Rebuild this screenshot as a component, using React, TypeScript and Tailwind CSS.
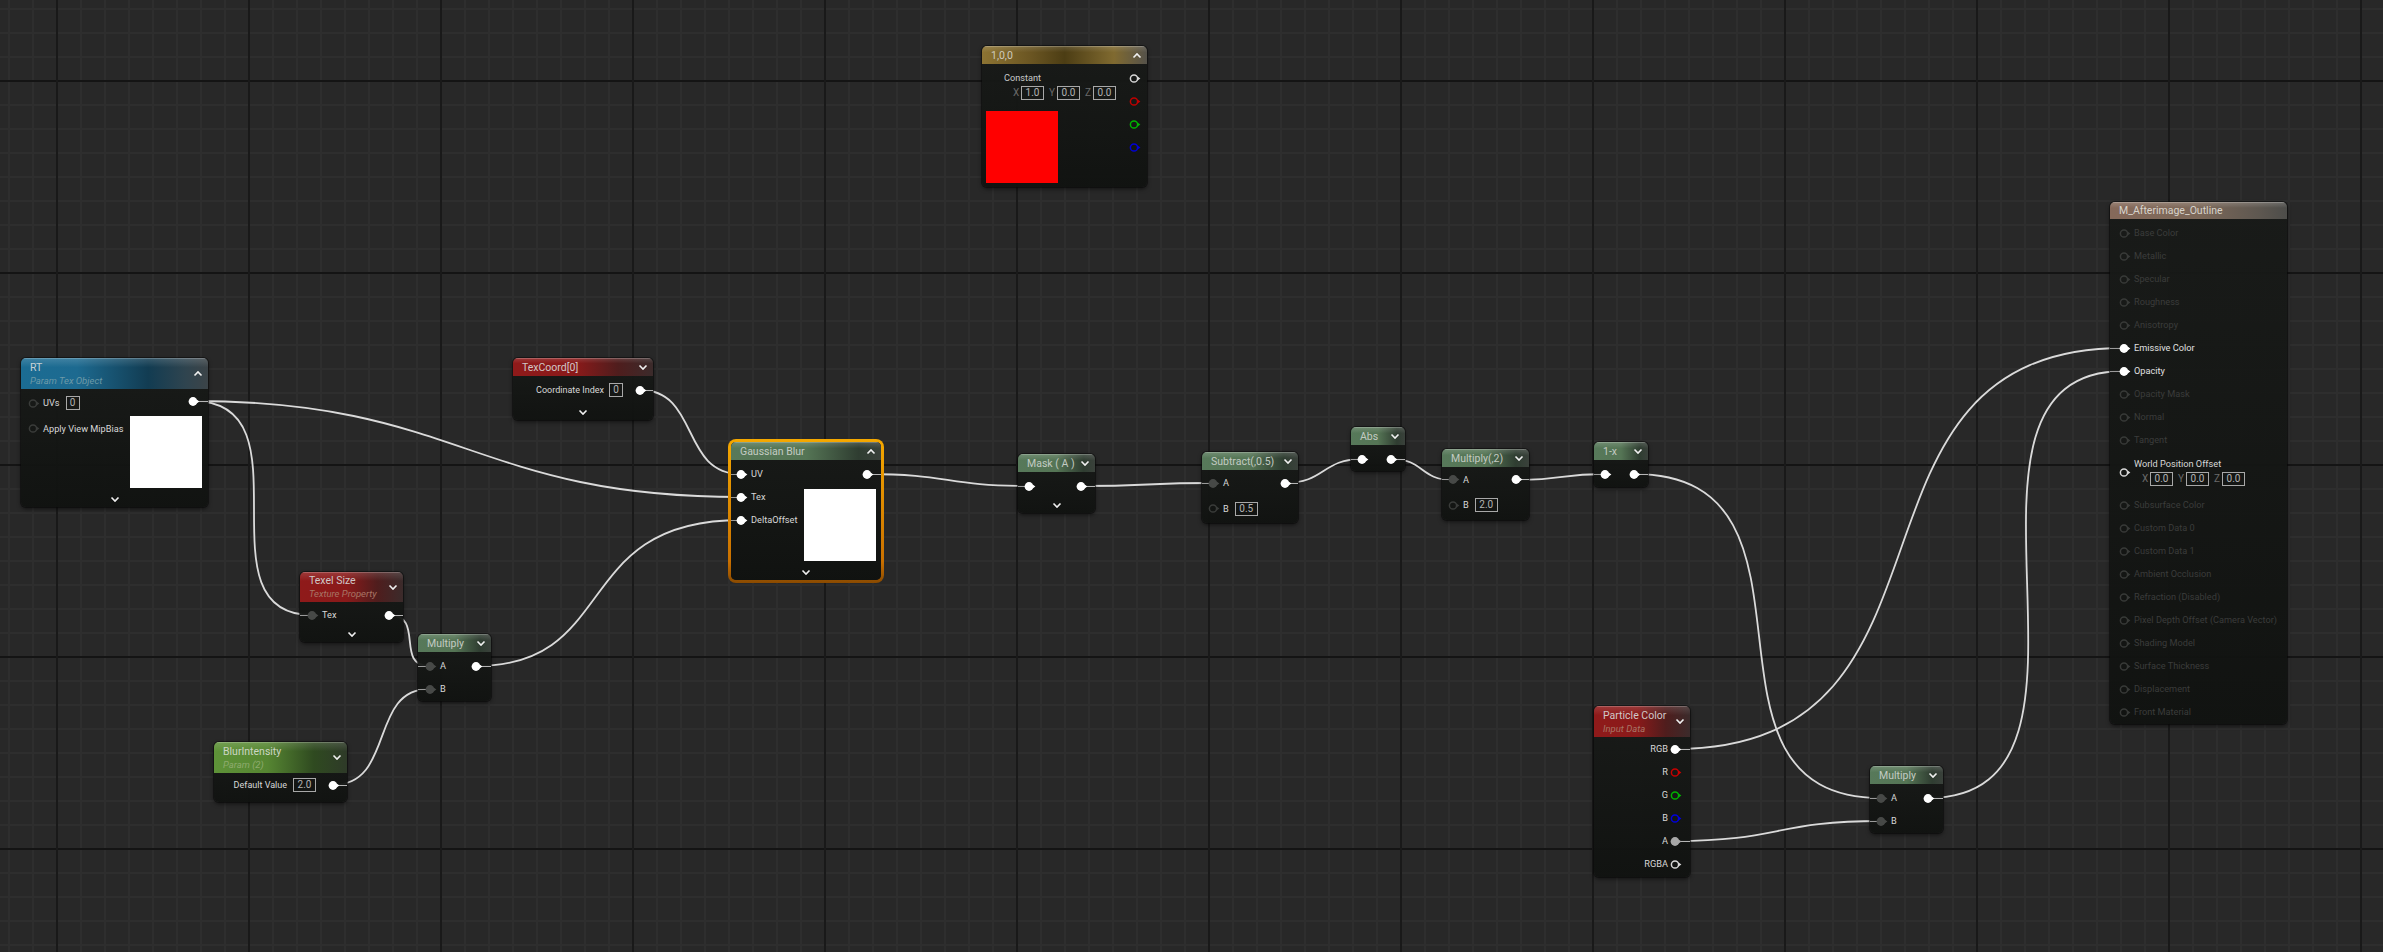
import type { ReactNode } from 'react';

type Tone = 'blue' | 'red' | 'green' | 'lime' | 'gold' | 'brown';

const toneHeader: Record<Tone, string> = {
    blue: 'bg-[linear-gradient(180deg,rgba(255,255,255,0.16),rgba(255,255,255,0)_30%),linear-gradient(90deg,#1b6c93_0%,#1d6a90_30%,#123c52_68%,#2f444f_88%,#3c4448_100%)]',
    red: 'bg-[linear-gradient(180deg,rgba(255,255,255,0.14),rgba(255,255,255,0)_30%),linear-gradient(90deg,#8f1a1a_0%,#8a1a1a_45%,#4f1d1d_75%,#3b2b2b_100%)]',
    green: 'bg-[linear-gradient(180deg,rgba(255,255,255,0.16),rgba(255,255,255,0)_35%),linear-gradient(90deg,#57795a_0%,#557555_50%,#2f3d31_85%,#3a413b_100%)]',
    lime: 'bg-[linear-gradient(180deg,rgba(255,255,255,0.14),rgba(255,255,255,0)_30%),linear-gradient(90deg,#5e9238_0%,#568632_40%,#2f4a20_75%,#2e3a28_100%)]',
    gold: 'bg-[linear-gradient(180deg,rgba(255,255,255,0.14),rgba(255,255,255,0)_35%),linear-gradient(90deg,#8d7433_0%,#6a5522_30%,#4c3d14_50%,#806a30_80%,#55524a_100%)]',
    brown: 'bg-[linear-gradient(180deg,rgba(255,255,255,0.18),rgba(255,255,255,0)_35%),linear-gradient(90deg,#85695a_0%,#7c6859_50%,#5d5750_85%,#4d4d4a_100%)]',
};

function Chevron({ up }: { up?: boolean }) {
    return (
        <svg width="10" height="7" viewBox="0 0 10 7" className="shrink-0">
            <path d={up ? 'M1.5 5.5 5 2l3.5 3.5' : 'M1.5 1.5 5 5l3.5-3.5'} fill="none" stroke="#f0f0f0" strokeWidth="1.6" />
        </svg>
    );
}

type PinProps = {
    color?: string;
    fill?: boolean;
    wired?: 'in' | 'out';
};

function Pin({ color = '#ffffff', fill = false, wired }: PinProps) {
    return (
        <svg width="13" height="11" viewBox="0 0 13 11" className="shrink-0 overflow-visible">
            {/* short lead to the node edge, the node clips it */}
            {wired === 'in' && <line x1="-12" y1="5.5" x2="2" y2="5.5" stroke="#9a9a9a" strokeWidth="1" />}
            {wired === 'out' && <line x1="9" y1="5.5" x2="30" y2="5.5" stroke="#b5b5b5" strokeWidth="1" />}
            <path d="M8.6 3.4 11.4 5.5 8.6 7.6Z" fill={color} />
            {fill ? (
                <circle cx="5" cy="5.5" r="4.4" fill={color} />
            ) : (
                <circle cx="5" cy="5.5" r="3.6" fill="none" stroke={color} strokeWidth="1.5" />
            )}
        </svg>
    );
}

function ValueBox({ children, wide }: { children: ReactNode; wide?: boolean }) {
    return (
        <span className={`flex h-[14px] items-center justify-center border border-[#a8a8a8] text-[10px] leading-none text-[#b4b4b4] ${wide ? 'w-[23px]' : 'w-[14px]'}`}>
            {children}
        </span>
    );
}

function VectorInput({ x = '0.0' }: { x?: string }) {
    const axes = [
        ['X', x],
        ['Y', '0.0'],
        ['Z', '0.0'],
    ];
    return (
        <div className="flex gap-[5px]">
            {axes.map(([axis, value]) => (
                <div key={axis} className="flex items-center gap-[2px]">
                    <span className="w-[6px] text-[10px] leading-none text-[#6a6a6a]">{axis}</span>
                    <ValueBox wide>{value}</ValueBox>
                </div>
            ))}
        </div>
    );
}

function Row({ children, className = '' }: { children: ReactNode; className?: string }) {
    return <div className={`flex h-[23px] items-center gap-[2px] whitespace-nowrap text-[9.2px] leading-none text-[#d8d8d8] ${className}`}>{children}</div>;
}

function Preview({ className = '' }: { className?: string }) {
    return <div className={`h-[72px] w-[72px] bg-white ${className}`} />;
}

function MoreRow({ className = 'h-[15px]' }: { className?: string }) {
    return (
        <div className={`mt-auto flex shrink-0 items-center justify-center ${className}`}>
            <Chevron />
        </div>
    );
}

type NodeProps = {
    box: string;
    head: string;
    tone: Tone;
    title: string;
    sub?: string;
    subColor?: string;
    chevron?: 'up' | 'down' | null;
    titleColor?: string;
    children: ReactNode;
};

function GraphNode({ box, head, tone, title, sub, subColor, chevron = 'down', titleColor = 'text-[#c3cbc3]', children }: NodeProps) {
    return (
        <div className={`absolute flex flex-col overflow-hidden rounded-[5px] bg-[linear-gradient(180deg,rgba(24,26,24,0.95),rgba(16,18,16,0.95))] shadow-[0_0_0_1px_rgba(10,10,10,0.55),0_2px_4px_rgba(0,0,0,0.55)] ${box}`}>
            <div className={`flex shrink-0 items-center justify-between pl-[9px] pr-[5px] shadow-[inset_0_1px_0_rgba(255,255,255,0.2)] ${head} ${toneHeader[tone]}`}>
                <div className="flex flex-col gap-[3px] whitespace-nowrap">
                    <span className={`text-[10.5px] leading-[11px] ${titleColor}`}>{title}</span>
                    {sub && <span className={`text-[9.5px] italic leading-[10px] ${subColor}`}>{sub}</span>}
                </div>
                {chevron && <Chevron up={chevron === 'up'} />}
            </div>
            {children}
        </div>
    );
}

const wires = [
    'M193 401C314 401 195 615 312 615',
    'M193 401C460 401 474 497 741 497',
    'M640 390C700 390 680 474 741 474',
    'M476 666C620 666 570 520 741 520',
    'M389 615C425 615 395 666 429 666',
    'M333 785C395 785 369 689 429 689',
    'M867 474C950 474 945 486 1029 486',
    'M1081 486C1150 486 1145 483 1213 483',
    'M1285 483C1325 483 1322 459 1362 459',
    'M1391 459C1425 459 1419 480 1453 480',
    'M1516 480C1560 480 1560 474 1605 474',
    'M1634 474C1846 474 1673 798 1881 798',
    'M1675 749C1985 749 1818 348 2124 348',
    'M1675 841C1780 841 1775 821 1881 821',
    'M1928 798C2139 798 1916 371 2124 371',
];

const materialTop = ['Base Color', 'Metallic', 'Specular', 'Roughness', 'Anisotropy'];
const materialMid = ['Opacity Mask', 'Normal', 'Tangent'];
const materialBottom = [
    'Subsurface Color',
    'Custom Data 0',
    'Custom Data 1',
    'Ambient Occlusion',
    'Refraction (Disabled)',
    'Pixel Depth Offset (Camera Vector)',
    'Shading Model',
    'Surface Thickness',
    'Displacement',
    'Front Material',
];

function DimRow({ label }: { label: string }) {
    return (
        <Row className="pl-[9px] !text-[#3b3c3b]">
            <Pin color="#383a38" />
            {label}
        </Row>
    );
}

export default function App() {
    return (
        <div className="relative h-[952px] w-[2383px] overflow-hidden bg-[#282828] [font-family:Roboto,sans-serif] [background-image:linear-gradient(to_right,#191919_2px,transparent_2px),linear-gradient(to_bottom,#141414_2px,transparent_2px),linear-gradient(to_right,#2e2e2e_2px,transparent_2px),linear-gradient(to_bottom,#2e2e2e_2px,transparent_2px)] [background-size:192px_100%,100%_192px,24px_100%,100%_24px] [background-position:56px_0,0_80px,8px_0,0_8px]">
            {/* Wires */}
            <svg className="absolute inset-0" width="2383" height="952" viewBox="0 0 2383 952" fill="none">
                {wires.map((d) => (
                    <path key={d} d={d} stroke="#dadada" strokeWidth="1.8" />
                ))}
            </svg>

            {/* RT */}
            <GraphNode box="left-[21px] top-[358px] w-[187px] h-[149px]" head="h-[31px]" tone="blue" title="RT" sub="Param Tex Object" subColor="text-[#6d9aa8]" chevron="up" titleColor="text-[#c8d2d6]">
                <div className="flex justify-between pl-[7px] pr-[6px]">
                    <div className="pt-[2.5px]">
                        <Row>
                            <Pin color="#3a3c3a" />
                            UVs
                            <span className="ml-[4px]"><ValueBox>0</ValueBox></span>
                        </Row>
                        <Row className="mt-[2.5px]">
                            <Pin color="#3a3c3a" />
                            Apply View MipBias
                        </Row>
                    </div>
                    <div className="flex flex-col items-end">
                        <div className="flex h-[24px] items-center pr-[1px]"><Pin fill wired="out" /></div>
                        <Preview className="mt-[3px]" />
                    </div>
                </div>
                <MoreRow />
            </GraphNode>

            {/* TexCoord */}
            <GraphNode box="left-[513px] top-[358px] w-[140px] h-[62px]" head="h-[18px]" tone="red" title="TexCoord[0]" titleColor="text-[#d0c8c8]">
                <div className="flex justify-end pr-[5px] pt-[2.5px]">
                    <Row className="!text-[9px]">
                        Coordinate Index
                        <span className="ml-[3px] mr-[10px]"><ValueBox>0</ValueBox></span>
                        <Pin fill wired="out" />
                    </Row>
                </div>
                <MoreRow />
            </GraphNode>

            {/* Texel Size */}
            <GraphNode box="left-[300px] top-[572px] w-[103px] h-[70px]" head="h-[30px]" tone="red" title="Texel Size" sub="Texture Property" subColor="text-[#a87565]" titleColor="text-[#d0c8c8]">
                <div className="flex justify-between pl-[7px] pr-[6px] pt-[1.5px]">
                    <Row>
                        <Pin color="#474947" fill wired="in" />
                        Tex
                    </Row>
                    <Row><Pin fill wired="out" /></Row>
                </div>
                <MoreRow className="h-[15px]" />
            </GraphNode>

            {/* Multiply */}
            <GraphNode box="left-[418px] top-[634px] w-[73px] h-[67px]" head="h-[18px]" tone="green" title="Multiply">
                <div className="flex justify-between pl-[7px] pr-[7px] pt-[2.5px]">
                    <div>
                        <Row><Pin color="#474947" fill wired="in" />A</Row>
                        <Row><Pin color="#474947" fill wired="in" />B</Row>
                    </div>
                    <Row><Pin fill wired="out" /></Row>
                </div>
            </GraphNode>

            {/* BlurIntensity */}
            <GraphNode box="left-[214px] top-[742px] w-[133px] h-[60px]" head="h-[31px]" tone="lime" title="BlurIntensity" sub="Param (2)" subColor="text-[#8eab6e]" titleColor="text-[#cdd6c4]">
                <div className="flex justify-end pr-[6px] pt-[0.5px]">
                    <Row className="!text-[9px]">
                        Default Value
                        <span className="ml-[4px] mr-[10px]"><ValueBox wide>2.0</ValueBox></span>
                        <Pin fill wired="out" />
                    </Row>
                </div>
            </GraphNode>

            {/* Constant */}
            <GraphNode box="left-[982px] top-[46px] w-[165px] h-[141px]" head="h-[18px]" tone="gold" title="1,0,0" chevron="up" titleColor="text-[#cfcbbd]">
                <div className="flex justify-between pl-[4px] pr-[5px]">
                    <div className="pt-[7px]">
                        <div className="h-[14px] pl-[18px] text-[9.2px] leading-[14px] text-[#c8c8c8]">Constant</div>
                        <div className="pl-[27px] pt-[1px]"><VectorInput x="1.0" /></div>
                        <div className="mt-[11px] h-[72px] w-[72px] bg-[#ff0000]" />
                    </div>
                    <div className="pt-[2.5px]">
                        <Row><Pin color="#d8d8d8" /></Row>
                        <Row><Pin color="#c00000" /></Row>
                        <Row><Pin color="#00b400" /></Row>
                        <Row><Pin color="#0000d8" /></Row>
                    </div>
                </div>
            </GraphNode>

            {/* Gaussian Blur, selected */}
            <div className="absolute left-[728px] top-[439px] h-[144px] w-[156px] rounded-[8px] bg-[linear-gradient(180deg,#f5a800,#c97000_85%,#8a4a00)] p-[3px]">
                <div className="relative h-full w-full rounded-[5px] bg-[#161716]">
                    <GraphNode box="inset-0 !shadow-none" head="h-[18px]" tone="green" title="Gaussian Blur" chevron="up">
                        <div className="flex justify-between pl-[5px] pr-[5px] pt-[2.5px]">
                            <div>
                                <Row><Pin fill wired="in" />UV</Row>
                                <Row><Pin fill wired="in" />Tex</Row>
                                <Row><Pin fill wired="in" />DeltaOffset</Row>
                            </div>
                            <div className="flex flex-col items-end">
                                <Row className="pr-[1px]"><Pin fill wired="out" /></Row>
                                <Preview className="mt-[3.5px]" />
                            </div>
                        </div>
                        <MoreRow className="h-[16px]" />
                    </GraphNode>
                </div>
            </div>

            {/* Mask ( A ) */}
            <GraphNode box="left-[1018px] top-[454px] w-[77px] h-[59px]" head="h-[18px]" tone="green" title="Mask ( A )">
                <div className="flex justify-between pl-[6px] pr-[6px] pt-[2.5px]">
                    <Row><Pin fill wired="in" /></Row>
                    <Row><Pin fill wired="out" /></Row>
                </div>
                <MoreRow />
            </GraphNode>

            {/* Subtract */}
            <GraphNode box="left-[1202px] top-[452px] w-[96px] h-[71px]" head="h-[18px]" tone="green" title="Subtract(,0.5)">
                <div className="flex justify-between pl-[6px] pr-[5px] pt-[1.5px]">
                    <div>
                        <Row><Pin color="#474947" fill wired="in" />A</Row>
                        <Row className="mt-[2.5px]">
                            <Pin color="#3a3c3a" />
                            B
                            <span className="ml-[4px]"><ValueBox wide>0.5</ValueBox></span>
                        </Row>
                    </div>
                    <Row><Pin fill wired="out" /></Row>
                </div>
            </GraphNode>

            {/* Abs */}
            <GraphNode box="left-[1351px] top-[427px] w-[54px] h-[44px]" head="h-[18px]" tone="green" title="Abs">
                <div className="flex justify-between pl-[6px] pr-[6px] pt-[2.5px]">
                    <Row><Pin fill wired="in" /></Row>
                    <Row><Pin fill wired="out" /></Row>
                </div>
            </GraphNode>

            {/* Multiply(,2) */}
            <GraphNode box="left-[1442px] top-[449px] w-[87px] h-[71px]" head="h-[18px]" tone="green" title="Multiply(,2)">
                <div className="flex justify-between pl-[6px] pr-[5px] pt-[1px]">
                    <div>
                        <Row><Pin color="#474947" fill wired="in" />A</Row>
                        <Row className="mt-[2.5px]">
                            <Pin color="#3a3c3a" />
                            B
                            <span className="ml-[4px]"><ValueBox wide>2.0</ValueBox></span>
                        </Row>
                    </div>
                    <Row><Pin fill wired="out" /></Row>
                </div>
            </GraphNode>

            {/* 1-x */}
            <GraphNode box="left-[1594px] top-[442px] w-[54px] h-[45px]" head="h-[18px]" tone="green" title="1-x">
                <div className="flex justify-between pl-[6px] pr-[6px] pt-[2.5px]">
                    <Row><Pin fill wired="in" /></Row>
                    <Row><Pin fill wired="out" /></Row>
                </div>
            </GraphNode>

            {/* Particle Color */}
            <GraphNode box="left-[1594px] top-[706px] w-[96px] h-[171px]" head="h-[31px]" tone="red" title="Particle Color" sub="Input Data" subColor="text-[#a87565]" titleColor="text-[#d0c8c8]">
                <div className="flex flex-col items-end pr-[7px] pt-[0.5px]">
                    <Row>RGB<Pin fill wired="out" /></Row>
                    <Row>R<Pin color="#c80000" /></Row>
                    <Row>G<Pin color="#00b400" /></Row>
                    <Row>B<Pin color="#0000e0" /></Row>
                    <Row>A<Pin color="#a8a8a8" fill wired="out" /></Row>
                    <Row>RGBA<Pin color="#d8d8d8" /></Row>
                </div>
            </GraphNode>

            {/* Multiply, second */}
            <GraphNode box="left-[1870px] top-[766px] w-[73px] h-[67px]" head="h-[18px]" tone="green" title="Multiply">
                <div className="flex justify-between pl-[6px] pr-[7px] pt-[2.5px]">
                    <div>
                        <Row><Pin color="#474947" fill wired="in" />A</Row>
                        <Row><Pin color="#474947" fill wired="in" />B</Row>
                    </div>
                    <Row><Pin fill wired="out" /></Row>
                </div>
            </GraphNode>

            {/* Material result */}
            <GraphNode box="left-[2110px] top-[202px] h-[522px] w-[177px]" head="h-[17px]" tone="brown" title="M_Afterimage_Outline" titleColor="text-[#d8d4cc]" chevron={null}>
                <div className="pt-[2.5px]">
                    {materialTop.map((label) => <DimRow key={label} label={label} />)}
                    <Row className="pl-[9px] !text-[#e0e0e0]"><Pin fill wired="in" />Emissive Color</Row>
                    <Row className="pl-[9px] !text-[#e0e0e0]"><Pin fill wired="in" />Opacity</Row>
                    {materialMid.map((label) => <DimRow key={label} label={label} />)}
                    <div className="flex h-[42px] items-center gap-[2px] pl-[9px]">
                        <Pin color="#d8d8d8" />
                        <div className="self-start pt-[5px]">
                            <div className="h-[14px] text-[9.2px] leading-[14px] text-[#d8d8d8]">World Position Offset</div>
                            <div className="pl-[8px] pt-[1px]"><VectorInput /></div>
                        </div>
                    </div>
                    {materialBottom.map((label) => <DimRow key={label} label={label} />)}
                </div>
            </GraphNode>
        </div>
    );
}
